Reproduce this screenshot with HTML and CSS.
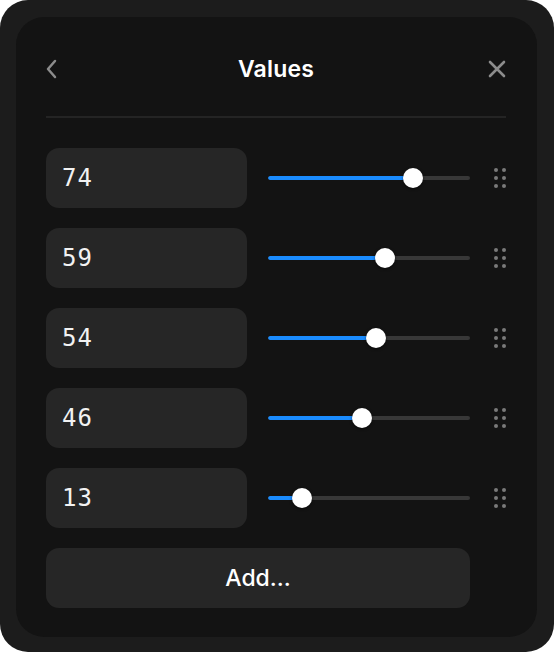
FILE: index.html
```html
<!DOCTYPE html>
<html>
<head>
<meta charset="utf-8">
<link rel="stylesheet" href="styles.css">
</head>
<body>
<div class="frame">
  <div class="panel">
    <div class="header">
      <button class="icon-btn" aria-label="Back">
        <svg width="12" height="20" viewBox="0 0 12 20"><path d="M9 2 L2 10 L9 18" fill="none" stroke="#8c8c8c" stroke-width="2.5" stroke-linecap="round" stroke-linejoin="round"/></svg>
      </button>
      <div class="title">Values</div>
      <button class="icon-btn" aria-label="Close">
        <svg width="18" height="18" viewBox="0 0 18 18"><path d="M2 2 L16 16 M16 2 L2 16" fill="none" stroke="#8c8c8c" stroke-width="2.6" stroke-linecap="round"/></svg>
      </button>
    </div>
    <div class="divider"></div>
    <div class="list">
      <div class="row">
        <div class="input">74</div>
        <div class="slider"><div class="track"><div class="fill" style="width:calc(10px + 0.74 * 182px)"></div></div><div class="thumb" style="left:calc(0.74 * 182px)"></div></div>
        <div class="handle"><i></i><i></i><i></i><i></i><i></i><i></i></div>
      </div>
      <div class="row">
        <div class="input">59</div>
        <div class="slider"><div class="track"><div class="fill" style="width:calc(10px + 0.59 * 182px)"></div></div><div class="thumb" style="left:calc(0.59 * 182px)"></div></div>
        <div class="handle"><i></i><i></i><i></i><i></i><i></i><i></i></div>
      </div>
      <div class="row">
        <div class="input">54</div>
        <div class="slider"><div class="track"><div class="fill" style="width:calc(10px + 0.54 * 182px)"></div></div><div class="thumb" style="left:calc(0.54 * 182px)"></div></div>
        <div class="handle"><i></i><i></i><i></i><i></i><i></i><i></i></div>
      </div>
      <div class="row">
        <div class="input">46</div>
        <div class="slider"><div class="track"><div class="fill" style="width:calc(10px + 0.46 * 182px)"></div></div><div class="thumb" style="left:calc(0.46 * 182px)"></div></div>
        <div class="handle"><i></i><i></i><i></i><i></i><i></i><i></i></div>
      </div>
      <div class="row">
        <div class="input">13</div>
        <div class="slider"><div class="track"><div class="fill" style="width:calc(10px + 0.13 * 182px)"></div></div><div class="thumb" style="left:calc(0.13 * 182px)"></div></div>
        <div class="handle"><i></i><i></i><i></i><i></i><i></i><i></i></div>
      </div>
      <button class="add">Add...</button>
    </div>
  </div>
</div>
</body>
</html>
```

FILE: styles.css
```css
* { box-sizing: border-box; }
html, body { margin: 0; padding: 0; background: #ffffff; }
body { font-family: Inter, "Noto Sans", sans-serif; }

.frame {
  width: 554px;
  height: 652px;
  background: #1c1c1c;
  border-radius: 28px;
  padding: 17px 17px 15px 16px;
}

.panel {
  height: 100%;
  background: #131313;
  border-radius: 28px;
  padding: 0 31px 0 30px;
  display: flex;
  flex-direction: column;
}

.header {
  height: 99px;
  padding-top: 4px;
  display: flex;
  align-items: center;
  justify-content: space-between;
}

.icon-btn {
  background: none;
  border: 0;
  padding: 0;
  width: 20px;
  height: 20px;
  display: flex;
  align-items: center;
  justify-content: center;
  cursor: pointer;
}
.icon-btn:first-child { justify-content: flex-start; }
.icon-btn:last-child { justify-content: flex-end; }

.title {
  color: #ffffff;
  font-size: 23px;
  font-weight: 600;
  letter-spacing: 0.2px;
}

.divider {
  height: 2px;
  background: #242424;
}

.list {
  margin-top: 30px;
  display: flex;
  flex-direction: column;
  gap: 20px;
}

.row {
  height: 60px;
  display: flex;
  align-items: center;
}

.input {
  width: 201px;
  height: 60px;
  background: #262626;
  border-radius: 13px;
  padding-left: 16px;
  display: flex;
  align-items: center;
  color: #f2f2f2;
  font-family: "DejaVu Sans Mono", "Liberation Mono", monospace;
  font-size: 24px;
  letter-spacing: 1px;
}

.slider {
  position: relative;
  width: 202px;
  height: 20px;
  margin-left: 21px;
  display: flex;
  align-items: center;
}

.track {
  width: 100%;
  height: 4px;
  border-radius: 2px;
  background: #383838;
  overflow: hidden;
}

.fill {
  height: 100%;
  background: #1a8cff;
  border-radius: 2px;
}

.thumb {
  position: absolute;
  top: 0;
  width: 20px;
  height: 20px;
  border-radius: 50%;
  background: #ffffff;
  box-shadow: 0 1px 3px rgba(0, 0, 0, 0.6);
}

.handle {
  margin-left: auto;
  width: 12px;
  display: grid;
  grid-template-columns: 4px 4px;
  column-gap: 4px;
  row-gap: 4px;
}
.handle i {
  display: block;
  width: 4px;
  height: 4px;
  border-radius: 50%;
  background: #7a7a7a;
}

.add {
  width: 424px;
  height: 60px;
  border: 0;
  border-radius: 13px;
  background: #262626;
  color: #ffffff;
  font-family: Inter, "Noto Sans", sans-serif;
  font-size: 23px;
  font-weight: 500;
  cursor: pointer;
}
```
